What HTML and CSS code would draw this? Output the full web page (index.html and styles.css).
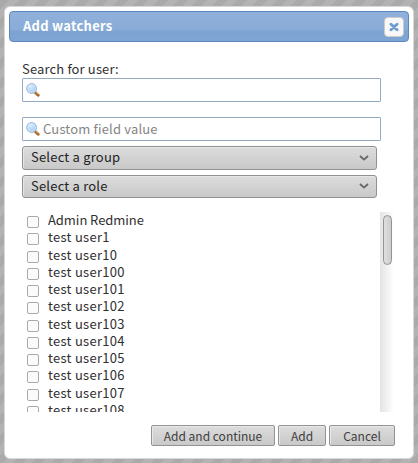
FILE: index.html
```html
<!DOCTYPE html>
<html lang="en">
<head>
<meta charset="utf-8">
<title>Add watchers</title>
<link rel="stylesheet" href="styles.css">
</head>
<body>
<svg class="defs" width="0" height="0" aria-hidden="true">
  <defs>
    <radialGradient id="lens" cx=".38" cy=".3" r=".75"><stop offset="0" stop-color="#dceeff"/><stop offset="1" stop-color="#9cc5f0"/></radialGradient>
    <symbol id="search" viewBox="0 0 14 14">
      <path d="M9 9.2 12.2 12.3" stroke="#a0632a" stroke-width="2.9" stroke-linecap="round"/>
      <path d="M9.6 9 12.2 11.5" stroke="#e9b36c" stroke-width="1" stroke-linecap="round"/>
      <circle cx="5.6" cy="5.5" r="4.9" fill="url(#lens)" stroke="#94b4db"/>
      <circle cx="5.6" cy="5.5" r="3.9" fill="none" stroke="#dcecfb" stroke-width=".7"/>
    </symbol>
  </defs>
</svg>
<main class="dialog">
  <header class="titlebar">
    <h1 class="title"><span>Add watchers</span></h1>
    <button class="close" aria-label="Close">
      <svg width="10" height="10" viewBox="0 0 10 10"><path d="M2 2.2 8 7.8M8 2.2 2 7.8" stroke="#6b9bd0" stroke-width="2.9" stroke-linecap="round"/></svg>
    </button>
  </header>
  <section class="content">
    <label class="label"><span>Search for user:</span></label>
    <div class="field"><svg class="icon"><use href="#search"/></svg></div>
    <div class="field second"><svg class="icon"><use href="#search"/></svg><span class="placeholder">Custom field value</span></div>
    <div class="select"><span>Select a group</span><svg class="arrow" viewBox="0 0 10 6"><path d="M1 1 5 4.6 9 1"/></svg></div>
    <div class="select role"><span>Select a role</span><svg class="arrow" viewBox="0 0 10 6"><path d="M1 1 5 4.6 9 1"/></svg></div>
    <div class="list">
      <ul class="users">
        <li><i class="box"></i><span class="admin">Admin Redmine</span></li>
        <li><i class="box"></i><span>test user1</span></li>
        <li><i class="box"></i><span>test user10</span></li>
        <li><i class="box"></i><span>test user100</span></li>
        <li><i class="box"></i><span>test user101</span></li>
        <li><i class="box"></i><span>test user102</span></li>
        <li><i class="box"></i><span>test user103</span></li>
        <li><i class="box"></i><span>test user104</span></li>
        <li><i class="box"></i><span>test user105</span></li>
        <li><i class="box"></i><span>test user106</span></li>
        <li><i class="box"></i><span>test user107</span></li>
        <li><i class="box"></i><span>test user108</span></li>
      </ul>
      <div class="track"><div class="thumb"></div></div>
    </div>
  </section>
  <footer class="actions">
    <button class="button continue">Add and continue</button>
    <button class="button add">Add</button>
    <button class="button cancel">Cancel</button>
  </footer>
</main>
</body>
</html>
```

FILE: styles.css
```css
* { box-sizing: border-box; }
body {
  margin: 0; width: 418px; height: 463px; padding: 6px 4px 4px; overflow: hidden;
  font: 13px/17px "Noto Sans CJK JP", "Noto Sans", sans-serif; letter-spacing: .28px; color: #303030;
  background: repeating-linear-gradient(135deg, #aaa 0 7px, #b3b3b3 7px 14px);
}
.defs { position: absolute; }
.dialog { width: 410px; height: 453px; padding: 4px; border: 1px solid #d8d8d8; border-radius: 6px; background: #fff; }
.titlebar {
  height: 31px; display: flex; align-items: center; justify-content: space-between; padding: 0 4px 0 13px;
  border: 1px solid #5b88ba; border-radius: 4px;
  background: linear-gradient(#8fb1db, #89abd7 62%, #7da3d3 65%, #7fa5d5);
}
.title { margin: 0; padding-bottom: 1px; font-size: 13px; line-height: 18px; font-weight: 700; color: #fff; letter-spacing: .25px; }
.close { width: 20px; height: 20px; padding: 0; display: grid; place-items: center; border: 1px solid #ccc; border-radius: 4px; background: #f8f8f8; }
.content { padding: 18px 13px 0; }
.label { display: block; height: 18px; letter-spacing: .14px; }
.field { width: 359px; height: 24px; display: flex; align-items: center; gap: 3px; padding-left: 3px; border: 1px solid #94a9c2; border-radius: 1px; background: #fff; }
.second { margin-top: 15px; }
.icon { width: 14px; height: 14px; flex: none; }
.placeholder { color: #858585; letter-spacing: .17px; padding-bottom: 1px; }
.select {
  width: 355px; height: 24px; margin-top: 5px; display: flex; align-items: center; justify-content: space-between; padding: 0 7px 1px 8px;
  border: 1px solid #919191; border-radius: 3px; background: linear-gradient(#dcdcdc, #c9c9c9); box-shadow: inset 1px 1px #e7e7e7; color: #222;
}
.select span { padding-bottom: 2px; letter-spacing: .2px; }
.role { height: 23px; }
.arrow { width: 10px; height: 6px; fill: none; stroke: #666; stroke-width: 1.8; }
.list { height: 200px; margin-top: 14px; display: flex; justify-content: space-between; overflow: hidden; width: 372px; }
.users { margin: -1px 0 0; padding: 0 0 0 5px; list-style: none; }
.users li { height: 17.27px; display: flex; gap: 9px; }
.admin { letter-spacing: -.05px; }
.box { width: 12px; height: 12px; margin-top: 5px; border: 1px solid #aaa; border-radius: 2px; background: #fbfbfb; }
.track { width: 14px; padding: 3px 0 0 3px; background: linear-gradient(90deg, #e4e4e4, #fff); }
.thumb { width: 9px; height: 50px; border: 1px solid #939393; border-radius: 5px; background: linear-gradient(90deg, #dfdfdf, #cdcdcd); }
.actions { display: flex; justify-content: flex-end; gap: 3px; padding: 13px 14px 0 0; }
.button {
  height: 21px; padding: 0 0 1px; border: 1px solid #939393; border-radius: 2px; color: #404040;
  background: linear-gradient(#dcdcdc, #c9c9c9); box-shadow: inset 1px 1px #e8e8e8; font: 12px/17px "Noto Sans CJK JP", sans-serif; letter-spacing: 0;
}
.continue { width: 124px; }
.add { width: 48px; }
.cancel { width: 66px; }
```
